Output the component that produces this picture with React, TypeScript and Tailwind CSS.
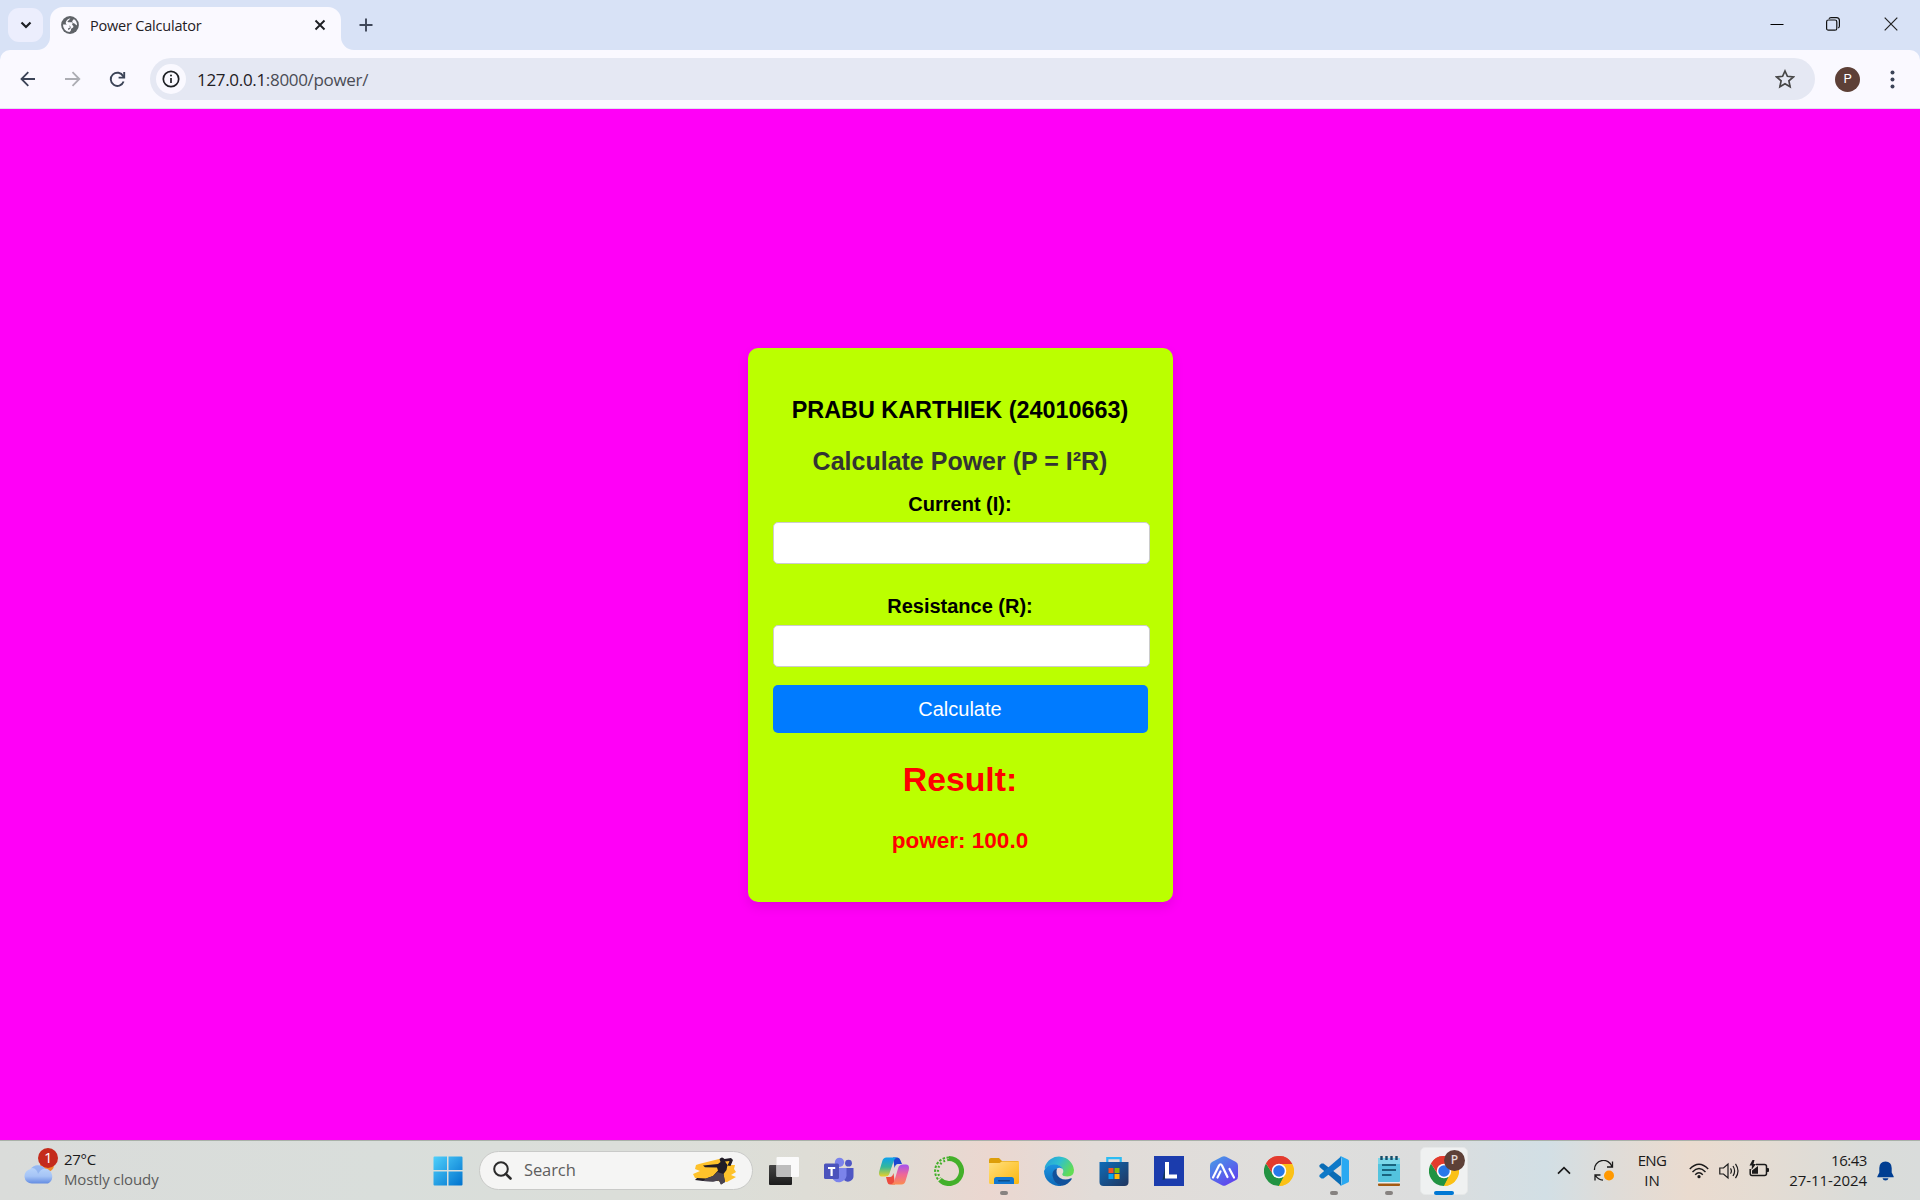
import React from 'react';

const UI = 'font-["Open_Sans","Noto_Sans",sans-serif]';

function GlobeIcon() {
  return (
    <svg width="18" height="18" viewBox="0 0 18 18">
      <circle cx="9" cy="9" r="8.9" fill="#5f6368" />
      <path d="M9.600 2.200C8.200 2.800 8.800 4 7.400 4.600C6.200 5.100 6.300 6.200 7.400 6.300H10.800C11.600 6.300 12 7.200 11.400 7.800C10.800 8.600 11.300 9 12 9.600C12.900 10.500 12.300 12.200 11 12.200C10.200 12.200 10 13 10 14C9.800 15.200 9 15.800 8.200 16A7 7 0 0 1 2 8.600H5.800C7.800 8.600 8.800 10 8.800 11.200C8.800 12 8.200 12.300 7 12.300V13.800C7.600 13.800 8.800 13.600 9.600 12.200C9.900 10.800 9.200 9.600 8 9.200C6.800 8.800 5 8.400 4.800 7.200C4.600 5.400 6.400 2.500 9.600 2.200Z" fill="#faf9ff" />
      <path d="M11.200 5.400C11.200 4.200 12.800 4.300 12.600 3C14.900 4.200 16.200 6.700 16 9.200C14.800 9.400 14.600 7.800 13.400 7.400C12.200 7 11.200 6.400 11.200 5.400Z" fill="#faf9ff" />
    </svg>
  );
}

function ChromeIcon() {
  return (
    <svg width="30" height="30" viewBox="0 0 48 48">
      <path d="M24 24L3.2 12A24 24 0 0 1 44.8 12Z" fill="#ea4335" />
      <path d="M24 24L44.8 12A24 24 0 0 1 24 48Z" fill="#fbc116" />
      <path d="M3.2 12L14.5 29.5L24 34L33.5 29.5L24 48A24 24 0 0 1 3.2 12Z" fill="#229342" />
      <path d="M24 12.9H44.8A24 24 0 0 1 24 48L33.6 29.5Z" fill="#fbc116" />
      <path d="M24 12.9H45.2L44.8 12A24 24 0 0 0 3.2 12L14.4 29.5Z" fill="#e33b2e" />
      <circle cx="24" cy="24" r="11.6" fill="#fff" />
      <circle cx="24" cy="24" r="9.2" fill="#2878ea" />
    </svg>
  );
}

function WindowsIcon() {
  return (
    <svg width="30" height="30" viewBox="0 0 30 30">
      <defs>
        <linearGradient id="win" x1="0" y1="0" x2="1" y2="1">
          <stop offset="0" stopColor="#4fd0fb" />
          <stop offset="1" stopColor="#0072ce" />
        </linearGradient>
      </defs>
      <path d="M1.5.5H14V14H.5V1.5Q.5.5 1.5.5ZM15.5.5H28.5Q29.5.5 29.5 1.5V14H15.5ZM.5 15.5H14V29.5H1.5Q.5 29.5.5 28.5ZM15.5 15.5H29.5V28.5Q29.5 29.5 28.5 29.5H15.5Z" fill="url(#win)" />
    </svg>
  );
}

function WeatherIcon() {
  return (
    <svg width="36" height="38" viewBox="0 0 36 38">
      <defs>
        <linearGradient id="cloud" x1="0" y1="0" x2="0" y2="1">
          <stop offset="0" stopColor="#bdd8fb" />
          <stop offset=".6" stopColor="#a5c4f6" />
          <stop offset="1" stopColor="#638ce2" />
        </linearGradient>
      </defs>
      <circle cx="23" cy="18" r="7" fill="#f28a2a" />
      <path d="M8 36.500A7.3 7.3 0 0 1 6.6 22A9 9 0 0 1 21 21.500A8 8 0 0 1 24 36.500Z" fill="url(#cloud)" />
      <path d="M6.6 22C9 19 14 24 14 27C15.5 24 18 21.500 21 21.500A9 9 0 0 0 6.6 22Z" fill="#86abec" opacity=".7" />
      <circle cx="24" cy="11" r="10" fill="#c42b1c" />
      <text x="24.300" y="16.200" textAnchor="middle" fontSize="15" fontFamily="Open Sans" fill="#fff">1</text>
    </svg>
  );
}

function FighterIcon() {
  return (
    <svg width="44" height="28" viewBox="0 0 44 28">
      <path d="M6 7L26 2L38 4L36 8L42 8L41 12L43 15L38 18L43 20L34 25L14 23L2 21L0 17L7 14L2 12L3 8Z" fill="#fec22b" />
      <path d="M26.500 2Q29-1 31.500 2L38 1L40 3L37.500 9L34.500 8.500L36.500 4L32 4.500L34.500 8L33.500 13L30.500 17L32 25L28 27.500L26 23.500L20 24.500L10 24L2 23L4 21L13 21.500L20 19L25 13.500L24 10.500L12 10.200L10 8.500L25 7L27.500 5Z" fill="#211c26" />
      <path d="M24.500 15L30.500 17L32 25L28 27.500L26 23.500L20 24.500L10 24L13 21.500L20 19Z" fill="#4a4450" />
    </svg>
  );
}

function TaskViewIcon() {
  return (
    <svg width="30" height="30" viewBox="0 0 30 30">
      <defs>
        <linearGradient id="tv" x1="0" y1="0" x2="0" y2="1"><stop offset="0" stopColor="#454545" /><stop offset="1" stopColor="#1c1c1c" /></linearGradient>
      </defs>
      <rect x="0" y="9" width="23" height="20" rx="1" fill="url(#tv)" />
      <rect x="7.500" y="1" width="22.500" height="20" rx="1" fill="#fafafa" />
      <path d="M7.500 9H22V21H8.500Q7.500 21 7.500 20Z" fill="#bdbdbd" />
    </svg>
  );
}

function TeamsIcon() {
  return (
    <svg width="30" height="30" viewBox="0 0 30 30">
      <circle cx="24.500" cy="7.200" r="3.400" fill="#4f57c4" />
      <circle cx="15.500" cy="6.300" r="4.600" fill="#7b83eb" />
      <path d="M20 12H29.500V19.500A5.600 5.600 0 0 1 20 24Z" fill="#4f57c4" />
      <path d="M9 12H22.500V20A7.800 7.800 0 0 1 9 23.500Z" fill="#7b83eb" />
      <rect x="0" y="7.500" width="15" height="15.500" rx="1.500" fill="#4b53bc" />
      <path d="M4 11H11.200V13H8.700V20H6.500V13H4Z" fill="#fff" />
    </svg>
  );
}

function CopilotIcon() {
  return (
    <svg width="30" height="30" viewBox="0 0 30 30">
      <defs>
        <linearGradient id="cpA" x1="0" y1="0" x2="0" y2="1"><stop offset="0" stopColor="#0ba0ee" /><stop offset=".5" stopColor="#35b89a" /><stop offset="1" stopColor="#e9d128" /></linearGradient>
        <linearGradient id="cpB" x1="0" y1="0" x2="0" y2="1"><stop offset="0" stopColor="#a350f0" /><stop offset=".5" stopColor="#ee6798" /><stop offset="1" stopColor="#fb8c50" /></linearGradient>
      </defs>
      <path d="M14 1.500H18.500Q20.500 1.500 21.300 4L23 8H19Q16.500 8 15.500 12Z" fill="#1b48d0" />
      <path d="M16 28.500H11Q9 28.500 8.300 26L7 21H11Q13.500 21 14.500 17Z" fill="#ec4b3e" />
      <path d="M7.500 1.500H18Q15.500 2 14.700 5L10.300 18Q9.500 20.500 6 20.500H3Q-.8 20.500.2 15.500L3.300 5Q4.200 1.500 7.500 1.500Z" fill="url(#cpA)" />
      <path d="M22.500 28.500H12Q14.500 28 15.300 25L19.200 12Q20 8.500 24 8.500H27Q30.800 8.500 29.800 14L26.700 24.500Q25.800 28.500 22.500 28.500Z" fill="url(#cpB)" />
    </svg>
  );
}

function AnacondaIcon() {
  return (
    <svg width="30" height="30" viewBox="0 0 30 30" fill="none" stroke="#43b02a">
      <path d="M15 2.500A12.500 12.500 0 1 1 6 23.700" strokeWidth="5" />
      <path d="M15 1.500A13.500 13.500 0 0 0 5 24.500" strokeWidth="2" strokeDasharray="2.500 1.500" />
      <path d="M15 4A11 11 0 0 0 6.500 22" strokeWidth="2.200" strokeDasharray="1.800 2.200" />
    </svg>
  );
}

function ExplorerIcon() {
  return (
    <svg width="30" height="30" viewBox="0 0 30 30">
      <defs>
        <linearGradient id="fold" x1="0" y1="0" x2="1" y2="1"><stop offset="0" stopColor="#ffe080" /><stop offset="1" stopColor="#fcb70d" /></linearGradient>
      </defs>
      <path d="M0 4Q0 2 2 2H10L13 5H28.500Q30 5 30 7V14H0Z" fill="#dd9e09" />
      <path d="M0 7H10.500L13 5.600H30V26.500Q30 28 28.500 28H1.500Q0 28 0 26.500Z" fill="url(#fold)" />
      <path d="M5 28V23.500Q5 21 7.500 21H22.500Q25 21 25 23.500V28Z" fill="#1277d0" />
      <rect x="9" y="24" width="12" height="1.500" rx=".7" fill="#0b4e8a" />
    </svg>
  );
}

function EdgeIcon() {
  return (
    <svg width="30" height="30" viewBox="0 0 30 30">
      <defs>
        <linearGradient id="edA" x1="0" y1="0" x2="1" y2=".5"><stop offset="0" stopColor="#2399dc" /><stop offset=".5" stopColor="#2fbfd0" /><stop offset="1" stopColor="#62dc55" /></linearGradient>
        <linearGradient id="edB" x1="0" y1="0" x2="0" y2="1"><stop offset="0" stopColor="#1b94e0" /><stop offset="1" stopColor="#0d69b8" /></linearGradient>
      </defs>
      <path d="M.8 11A15 15 0 0 1 30 14Q30 20.500 23.500 20.500Q18 20.500 18.300 18Q20 16 18.800 13Q16.500 9 11 9Q4 9 .8 13Z" fill="url(#edA)" />
      <path d="M0 15Q2 8.500 10 8.500Q17 8.500 19 13.500Q17 11 14 12Q10 13.500 9 18Q8.500 25 18 29.700A15 15 0 0 1 0 15Z" fill="url(#edB)" />
      <path d="M13 12.500Q8 14 8.500 19.500Q9.500 28 18 29.800Q24.500 28.500 27.800 23Q28 22 27 22.200Q21 25 16 22Q11 18.500 13 12.500Z" fill="#11519b" />
    </svg>
  );
}

function StoreIcon() {
  return (
    <svg width="30" height="30" viewBox="0 0 30 30">
      <defs>
        <linearGradient id="store" x1="0" y1="0" x2="1" y2="1"><stop offset="0" stopColor="#0e6cb8" /><stop offset="1" stopColor="#20355e" /></linearGradient>
      </defs>
      <path d="M8.300 7V2.200H21.700V7" fill="none" stroke="#2bbcf3" strokeWidth="2.200" />
      <path d="M.5 6H29.500V26Q29.500 30 25.500 30H4.500Q.5 30 .5 26Z" fill="url(#store)" />
      <path d="M9.500 12H14.500V17H9.500Z" fill="#f35325" />
      <path d="M15.500 12H20.500V17H15.500Z" fill="#81bc06" />
      <path d="M9.500 18H14.500V23H9.500Z" fill="#05a6f0" />
      <path d="M15.500 18H20.500V23H15.500Z" fill="#ffba08" />
    </svg>
  );
}

function LIcon() {
  return (
    <svg width="30" height="30" viewBox="0 0 30 30">
      <rect width="30" height="30" fill="#1b3cad" />
      <path d="M11 11L8.500 24L12 23Z" fill="#12365c" />
      <path d="M11 6H15V18.500H23V22.500H11Z" fill="#fff" />
    </svg>
  );
}

function HexIcon() {
  return (
    <svg width="30" height="30" viewBox="0 0 30 30">
      <defs>
        <linearGradient id="hex" x1="0" y1="0" x2=".7" y2="1"><stop offset="0" stopColor="#46a0e6" /><stop offset="1" stopColor="#6142ee" /></linearGradient>
      </defs>
      <path d="M13 .7Q15-.3 17 .7L27 6Q29 7.200 29 9.500V20.500Q29 22.800 27 24L17 29.300Q15 30.300 13 29.300L3 24Q1 22.800 1 20.500V9.500Q1 7.200 3 6Z" fill="url(#hex)" />
      <path d="M4 21.500L10 9.500Q11.500 7 13 9.500L18.500 21M8.500 21.500L11.500 15.500M20.500 13L25 21.500" fill="none" stroke="#fff" strokeWidth="2.200" strokeLinecap="round" />
    </svg>
  );
}

function VSCodeIcon() {
  return (
    <svg width="30" height="30" viewBox="0 0 30 30">
      <path d="M.4 9.300L2.500 7.500L4.500 7.600L22 21V29.500L.5 11Z" fill="#0a6cb5" />
      <path d="M.4 20.700L2.500 22.500L4.500 22.400L22 9V.5L.5 19Z" fill="#0e79c8" />
      <path d="M22 .3L29 3.500Q30 4 30 5V25Q30 26 29 26.500L22 29.700L21 29.500Q22.500 29 22.500 27V3Q22.500 1 21 .5Z" fill="#29a9f2" />
    </svg>
  );
}

function NotepadIcon() {
  return (
    <svg width="22" height="30" viewBox="0 0 22 30">
      <rect x="0" y="27" width="22" height="3" rx="1" fill="#a35a12" />
      <rect x="0" y="25.500" width="22" height="2" fill="#e9edf0" />
      <rect x="0" y="2" width="22" height="24" rx="1" fill="#53c3de" />
      <path d="M0 2H22V8H0Z" fill="#7bd7ea" />
      <path d="M3.500 0V4M8.500 0V4M13.500 0V4M18.500 0V4" stroke="#164d68" strokeWidth="2.400" />
      <path d="M4 9H18M4 14H18M4 19H13.500" stroke="#19647f" strokeWidth="1.800" />
    </svg>
  );
}

function Slot({ children, dot }: { children: React.ReactNode; dot?: boolean }) {
  return (
    <div className="relative flex h-full w-[55px] items-center justify-center">
      {children}
      {dot && <span className="absolute bottom-0 left-[23.500px] h-1 w-2 rounded-full bg-[#868280]" />}
    </div>
  );
}

function BrowserChrome() {
  return (
    <header className={`${UI} bg-[#d8e2f6]`}>
      <div className="flex h-[50px] items-start">
        <div className="ml-2 mt-2 flex h-[34px] w-[35px] items-center justify-center rounded-[11px] bg-[#eceefd]">
          <svg width="12" height="8" viewBox="0 0 12 8"><path d="M1.500 1.500L6 6L10.500 1.500" fill="none" stroke="#1d1f24" strokeWidth="2.200" /></svg>
        </div>
        <div className="relative ml-[7px] mt-[7px] flex h-[43px] w-[291px] items-center rounded-t-[13px] bg-[#faf9ff] pb-[7px]">
          <svg className="absolute -left-[13px] bottom-0" width="13" height="13"><path d="M13 0V13H0A13 13 0 0 0 13 0Z" fill="#faf9ff" /></svg>
          <svg className="absolute -right-[13px] bottom-0" width="13" height="13"><path d="M0 0V13H13A13 13 0 0 1 0 0Z" fill="#faf9ff" /></svg>
          <span className="ml-[11px]"><GlobeIcon /></span>
          <span className="ml-[11px] mt-px w-[210px] whitespace-nowrap text-[14.500px] tracking-[-0.200px] text-[#1f2024]">Power Calculator</span>
          <svg className="ml-[14px]" width="12" height="12" viewBox="0 0 12 12"><path d="M1.500 1.500L10.500 10.500M10.500 1.500L1.500 10.500" stroke="#1d1f24" strokeWidth="1.900" /></svg>
        </div>
        <svg className="ml-[18px] mt-[18px]" width="14" height="14" viewBox="0 0 14 14"><path d="M7 .5V13.500M.5 7H13.500" stroke="#3f4759" strokeWidth="1.900" /></svg>
        <div className="ml-auto flex items-center pr-[22px] pt-[17px]">
          <svg width="14" height="14"><path d="M.5 7.500H13.500" stroke="#000" strokeWidth="1" /></svg>
          <svg className="ml-[42px]" width="14" height="14" viewBox="0 0 14 14" fill="none" stroke="#111"><rect x=".6" y="3" width="10.200" height="10.200" rx="1.800" strokeWidth="1.200" /><path d="M3 1.800Q3.500.6 5 .6H10.500Q13.400.6 13.400 3.500V9Q13.400 10.500 12.200 11" strokeWidth="1.200" /></svg>
          <svg className="ml-[44px]" width="14" height="14" viewBox="0 0 14 14"><path d="M.7.700L13.300 13.300M13.300.700L.7 13.300" stroke="#222" strokeWidth="1.200" /></svg>
        </div>
      </div>
      <div className="flex h-[59px] items-start rounded-t-[10px] border-b border-[#dfe2ee] bg-[#faf9ff] pt-2">
        <div className="flex h-[42px] w-full items-center">
          <svg className="ml-[20px]" width="16" height="16" viewBox="0 0 16 16" fill="none" stroke="#3b4457" strokeWidth="1.800"><path d="M15 8H1.800M8.300 1.200L1.500 8L8.300 14.800" /></svg>
          <svg className="ml-[29px]" width="16" height="16" viewBox="0 0 16 16" fill="none" stroke="#acadb3" strokeWidth="1.800"><path d="M0 8H14M7.500 1.200L14.300 8L7.500 14.800" /></svg>
          <svg className="ml-[28px]" width="17" height="17" viewBox="0 0 17 17" fill="none" stroke="#3b4457" strokeWidth="1.900"><path d="M14.600 10.500A6.600 6.600 0 1 1 14.200 5.200L15.200 6.500" /><path d="M15.200 1V6.600H9.600" /></svg>
          <div className="ml-[24px] flex h-[42px] w-[1665px] items-center rounded-full bg-[#e5e8f3]">
            <div className="ml-[6px] flex h-[30px] w-[30px] items-center justify-center rounded-full bg-[#faf9ff]">
              <svg width="18" height="18" viewBox="0 0 18 18"><circle cx="9" cy="9" r="7.700" fill="none" stroke="#1d1f24" strokeWidth="1.700" /><path d="M9 8V13" stroke="#1d1f24" strokeWidth="1.700" /><circle cx="9" cy="5.500" r="1" fill="#1d1f24" /></svg>
            </div>
            <span className="ml-[11px] mt-px text-[17px] tracking-[-0.320px] text-[#4a4c55]"><span className="text-[#1f2024]">127.0.0.1</span>:8000/power/</span>
            <svg className="ml-auto mr-[20px]" width="20" height="20" viewBox="0 0 20 20"><path d="M10 2L12.400 7.300L18.300 8L13.900 11.900L15.100 17.700L10 14.700L4.900 17.700L6.100 11.900L1.700 8L7.600 7.300Z" fill="none" stroke="#474747" strokeWidth="1.700" /></svg>
          </div>
          <div className="ml-[20px] flex h-[25px] w-[25px] items-center justify-center rounded-full bg-[#5d4037] font-['Roboto',sans-serif] text-[13px] text-white">P</div>
          <svg className="ml-[30px]" width="5" height="19" viewBox="0 0 5 19" fill="#3b4457"><circle cx="2.500" cy="2.500" r="2" /><circle cx="2.500" cy="9.500" r="2" /><circle cx="2.500" cy="16.500" r="2" /></svg>
        </div>
      </div>
    </header>
  );
}

function PowerForm() {
  return (
    <form
      onSubmit={(e) => e.preventDefault()}
      className="mt-[239px] flex h-[554px] w-[425px] flex-col rounded-[10px] bg-[#bbff00] px-[25px] pt-[48px] text-center font-['Liberation_Sans',Arial,sans-serif] shadow-[0_5px_12px_rgba(0,0,0,0.1)]"
    >
      <h3 className="w-[374px] whitespace-nowrap text-[23.400px] font-bold leading-7 text-black">PRABU KARTHIEK (24010663)</h3>
      <h1 className="mt-[23px] w-[374px] text-[25px] font-bold leading-7 text-[#333]">Calculate Power (P = I²R)</h1>
      <label className="mt-[17px] w-[374px] text-[20px] font-bold leading-6 text-black">Current (I):</label>
      <input className="mt-[6px] h-[42px] w-[377px] shrink-0 rounded-[5px] border border-[#ccc] bg-white px-3" />
      <label className="mt-[30px] w-[374px] text-[20px] font-bold leading-6 text-black">Resistance (R):</label>
      <input className="mt-[7px] h-[42px] w-[377px] shrink-0 rounded-[5px] border border-[#ccc] bg-white px-3" />
      <button className="mt-[18px] h-12 shrink-0 rounded-[5px] bg-[#007bff] pr-px text-[20px] text-white">Calculate</button>
      <h2 className="mt-[26px] w-[374px] text-[33.750px] font-bold leading-10 text-[#f00]">Result:</h2>
      <p className="mt-[28px] w-[374px] text-[22.500px] font-bold leading-7 text-[#f00]">power: 100.0</p>
    </form>
  );
}

function Taskbar() {
  return (
    <footer className={`${UI} flex h-[60px] w-full items-center border-t border-[#a9b1a8] bg-[linear-gradient(90deg,#dadcda_0%,#d9dedb_20%,#dcded8_38%,#e0dcd4_46%,#ebd7d0_51.500%,#e2dcd8_57%,#dfdedc_66%,#dcdddd_74%,#d2dfe5_80.500%,#dfdcd8_84%,#eadbcf_88%,#e4dcd3_92%,#dadcd9_97%,#d9dcdb_100%)]`}>
      <div className="flex h-full w-[432.500px] pl-6 pt-[6px]">
        <WeatherIcon />
        <div className="ml-[4px] pt-[2px] text-[15px] leading-5">
          <div className="tracking-[-0.300px] text-[#1a1a1a]">27°C</div>
          <div className="tracking-[-0.120px] text-[#5c5c5c]">Mostly cloudy</div>
        </div>
      </div>
      <WindowsIcon />
      <div className="ml-[16.500px] flex h-[39px] w-[274px] items-center rounded-full border border-[#c9cac8] bg-[#f5f5f4] pl-[13px] pr-[15px]">
        <svg width="19" height="19" viewBox="0 0 19 19"><circle cx="8" cy="8" r="6.800" fill="none" stroke="#2a2a2a" strokeWidth="2" /><path d="M12.800 12.800L17.500 17.500" stroke="#2a2a2a" strokeWidth="2.600" strokeLinecap="round" /></svg>
        <span className="ml-[12px] text-[16.500px] tracking-[-0.100px] text-[#5e5e5e]">Search</span>
        <span className="ml-auto"><FighterIcon /></span>
      </div>
      <div className="ml-[3.500px] flex h-[48px]">
        <Slot><TaskViewIcon /></Slot>
        <Slot><TeamsIcon /></Slot>
        <Slot><CopilotIcon /></Slot>
        <Slot><AnacondaIcon /></Slot>
        <Slot dot><ExplorerIcon /></Slot>
        <Slot><EdgeIcon /></Slot>
        <Slot><StoreIcon /></Slot>
        <Slot><LIcon /></Slot>
        <Slot><HexIcon /></Slot>
        <Slot><ChromeIcon /></Slot>
        <Slot dot><VSCodeIcon /></Slot>
        <Slot dot><NotepadIcon /></Slot>
        <Slot>
          <div className="relative flex h-[48px] w-[48px] items-center justify-center rounded-[5px] border border-[#e6e8e8] bg-[#eff1f1]">
            <ChromeIcon />
            <span className="absolute right-[2px] top-[2px] flex h-[21px] w-[21px] items-center justify-center rounded-full bg-[#5d4037] text-[12px] font-semibold text-[#e0d8d5]">P</span>
            <span className="absolute -bottom-px left-[13px] h-1 w-5 rounded-full bg-[#0078d4]" />
          </div>
        </Slot>
      </div>
      <div className="ml-auto flex items-center pr-[26px] text-[15px] leading-5 text-[#1a1a1a]">
        <svg width="14" height="9" viewBox="0 0 14 9"><path d="M1 7.700L7 1.700L13 7.700" fill="none" stroke="#1a1a1a" strokeWidth="1.700" /></svg>
        <svg className="ml-[22px]" width="22" height="22" viewBox="0 0 22 22" fill="none" stroke="#1a1a1a" strokeWidth="1.300"><path d="M1.500 10A9 9 0 0 1 19 6.500M19.500 1.500V7H14" /><path d="M2 20.500V15H7.500M2.500 15.500Q5 19.500 10 20.200" /><circle cx="16" cy="15.500" r="5" fill="#ff9800" stroke="none" /></svg>
        <div className="-mt-px ml-[22px] w-[30px] text-center"><div className="tracking-[-0.600px]">ENG</div><div>IN</div></div>
        <svg className="ml-[22px]" width="20" height="16" viewBox="0 0 20 16" fill="none" stroke="#1a1a1a" strokeWidth="1.400"><path d="M.8 6Q10-3.500 19.200 6" /><path d="M3.500 8.900Q10 2.200 16.500 8.900M6.200 11.700Q10 7.800 13.800 11.700" /><circle cx="10" cy="13.700" r="1.600" fill="#1a1a1a" stroke="none" /></svg>
        <svg className="ml-[10px]" width="20" height="18" viewBox="0 0 20 18" fill="none" stroke="#1a1a1a" strokeWidth="1.200"><path d="M.8 6H4.500L9 2V16L4.500 12H.8Z" /><path d="M11.500 6.300Q13.300 9 11.500 11.700M14 4Q17.200 9 14 14M16.500 1.800Q21.500 9 16.500 16.200" /></svg>
        <svg className="-mt-1 ml-[10px]" width="20" height="17" viewBox="0 0 20 17"><path d="M7 4.500H15.500Q17.500 4.500 17.500 6.500V13.500Q17.500 15.500 15.500 15.500H3Q1.200 15.500 1.200 13.500V9" fill="none" stroke="#1a1a1a" strokeWidth="1.500" /><path d="M18 8H19Q20 8 20 9V11Q20 12 19 12H18Z" fill="#1a1a1a" /><path d="M3 13.700V10.500L9 6V13.700Z" fill="#1a1a1a" /><path d="M3.500 0L.5 5.500H3L2.500 10L7 4H4.500L5.500 0Z" fill="#1a1a1a" /></svg>
        <div className="-mt-px ml-[20px] w-[78px] whitespace-nowrap text-right"><div className="tracking-[-0.450px]">16:43</div><div className="tracking-[-0.050px]">27-11-2024</div></div>
        <svg className="ml-[10px]" width="17" height="20" viewBox="0 0 17 20" fill="#003e92"><path d="M8.500.5Q14.500.5 14.700 7V11.500L16.700 15.500V16.300H.3V15.500L2.300 11.500V7Q2.500.5 8.500.5Z" /><path d="M5.500 17.300H11.500Q11 19.500 8.500 19.500Q6 19.500 5.500 17.300Z" /></svg>
      </div>
    </footer>
  );
}

export default function App() {
  return (
    <div className="flex h-[1200px] w-[1920px] flex-col overflow-hidden">
      <BrowserChrome />
      <main className="flex flex-1 items-start bg-[#ff00f7] pl-[748px]">
        <PowerForm />
      </main>
      <Taskbar />
    </div>
  );
}
